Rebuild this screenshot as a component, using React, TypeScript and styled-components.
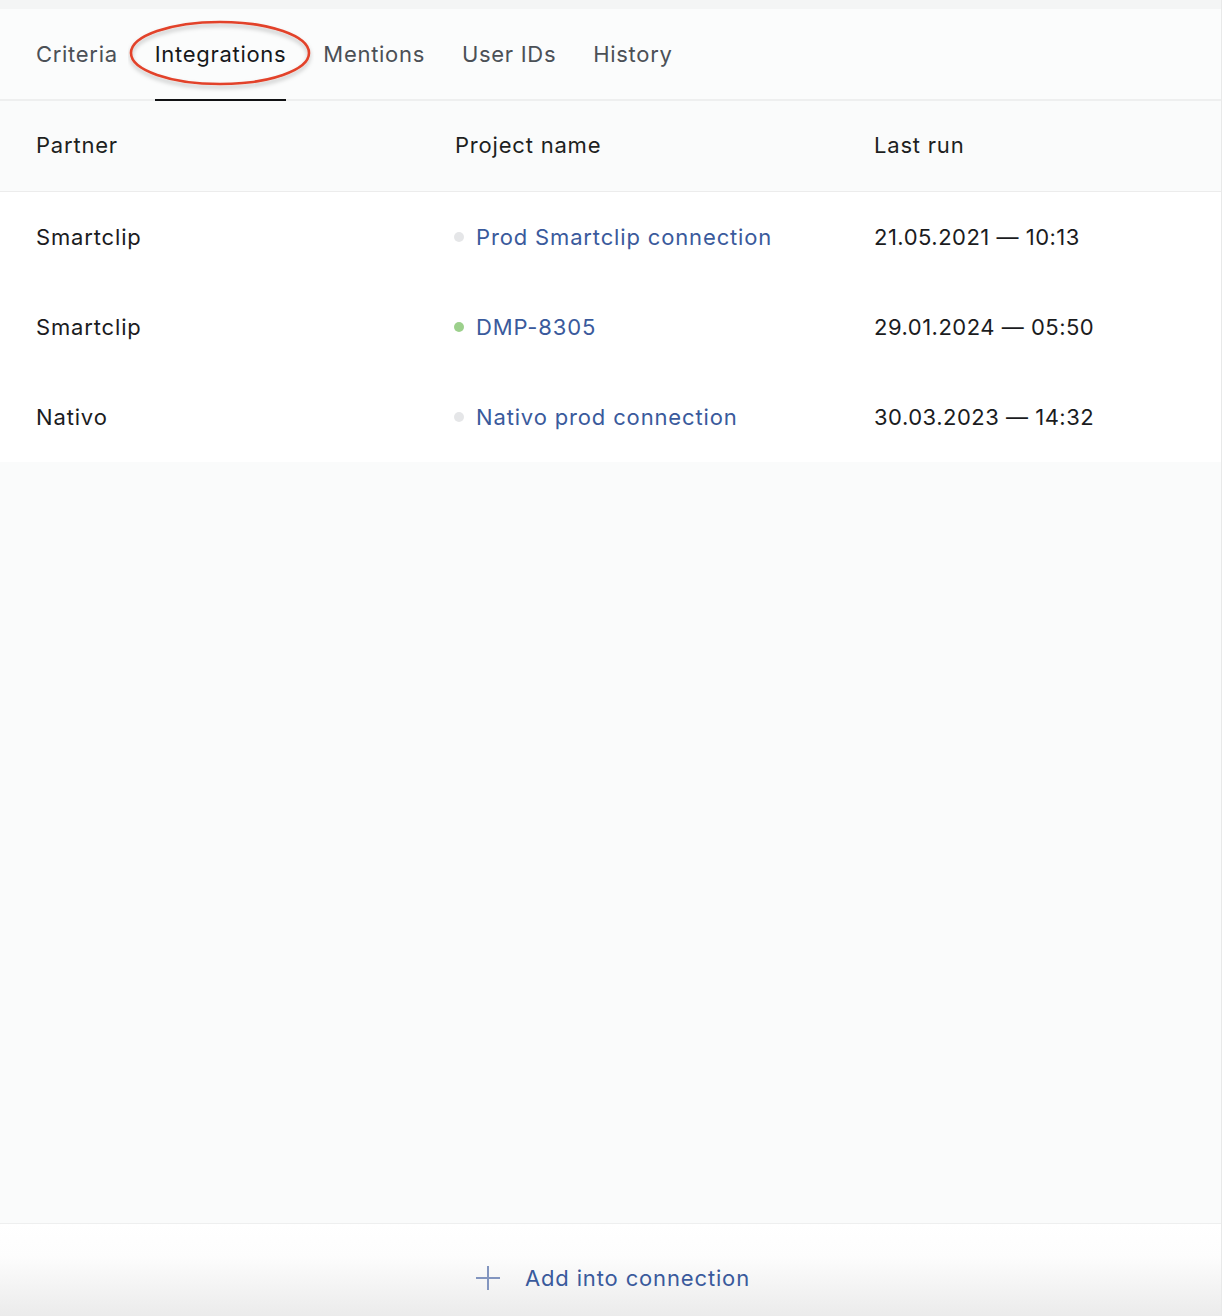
import React from 'react';
import styled, { createGlobalStyle } from 'styled-components';

const GlobalStyle = createGlobalStyle`
body {
  margin: 0;
  background: #ffffff;
  font-family: Inter, 'Noto Sans', sans-serif;
}
`;

const Page = styled.div`
display: flex;
flex-direction: column;
width: 1222px;
height: 1316px;
background: #fafbfb;
border-right: 1px solid #e8e9e9;
box-sizing: border-box;
`;

const TopStrip = styled.div`
height: 9px;
background: #f4f5f5;
`;

const TabBar = styled.nav`
position: relative;
display: flex;
align-items: stretch;
gap: 37px;
height: 92px;
padding-left: 36px;
background: #fbfcfc;
border-bottom: 2px solid #eeefef;
box-sizing: border-box;
`;

const Tab = styled.div<{ $active?: boolean }>`
position: relative;
display: flex;
align-items: center;
font-size: 22px;
letter-spacing: 0.7px;
color: ${({ $active }) => ($active ? '#16181a' : '#4b5056')};
&::after {
  content: '';
  position: absolute;
  left: 0;
  right: 0;
  bottom: -2px;
  height: 2px;
  background: ${({ $active }) => ($active ? '#111214' : 'transparent')};
}
`;

const Annotation = styled.svg`
position: absolute;
left: 128px;
top: 11px;
pointer-events: none;
`;

const HeaderRow = styled.div`
display: grid;
grid-template-columns: 419px 419px 1fr;
align-items: center;
height: 91px;
padding: 0 0 2px 36px;
background: #fafbfb;
border-bottom: 1px solid #ececec;
box-sizing: border-box;
font-size: 22px;
letter-spacing: 0.8px;
color: #1d1f21;
`;

const Body = styled.div`
background: #ffffff;
`;

const Row = styled.div`
display: grid;
grid-template-columns: 419px 419px 1fr;
align-items: center;
height: 90px;
padding-left: 36px;
font-size: 22px;
letter-spacing: 0.85px;
color: #1b1c1e;
`;

const LastRun = styled.div`
letter-spacing: 0.5px;
`;

const Project = styled.div`
display: flex;
align-items: center;
gap: 12px;
`;

const Dot = styled.span<{ $live?: boolean }>`
width: 10px;
height: 10px;
margin-left: -1px;
border-radius: 50%;
background: ${({ $live }) => ($live ? '#9cd08c' : '#e5e6e8')};
`;

const ProjectLink = styled.a`
color: #3a5a9c;
text-decoration: none;
`;

const Filler = styled.div`
flex: 1;
background: #fafbfb;
`;

const Footer = styled.div`
display: flex;
align-items: center;
justify-content: center;
height: 93px;
padding-top: 16px;
box-sizing: border-box;
border-top: 1px solid #eeefef;
background: linear-gradient(180deg, #ffffff 0%, #fdfdfd 35%, #ebebeb 100%);
`;

const AddButton = styled.button`
display: flex;
align-items: center;
gap: 24px;
border: none;
background: none;
padding: 0;
margin-left: 4px;
font-family: Inter, 'Noto Sans', sans-serif;
font-size: 22px;
letter-spacing: 0.85px;
color: #3a5a9c;
cursor: pointer;
`;

const rows = [
  { partner: 'Smartclip', project: 'Prod Smartclip connection', live: false, lastRun: '21.05.2021 — 10:13' },
  { partner: 'Smartclip', project: 'DMP-8305', live: true, lastRun: '29.01.2024 — 05:50' },
  { partner: 'Nativo', project: 'Nativo prod connection', live: false, lastRun: '30.03.2023 — 14:32' },
];

const tabs = ['Criteria', 'Integrations', 'Mentions', 'User IDs', 'History'];

const App: React.FC = () => (
  <>
    <GlobalStyle />
    <Page>
      <TopStrip />
      <TabBar>
        {tabs.map((tab) => (
          <Tab key={tab} $active={tab === 'Integrations'}>{tab}</Tab>
        ))}
        <Annotation width="186" height="76" viewBox="0 0 186 76">
          <defs>
            <filter id="shade" x="-10%" y="-10%" width="120%" height="140%">
              <feDropShadow dx="0" dy="3" stdDeviation="2" floodColor="#000" floodOpacity="0.25" />
            </filter>
          </defs>
          <ellipse cx="92" cy="33" rx="89" ry="31" fill="none" stroke="#e2432b" strokeWidth="2.6" filter="url(#shade)" />
        </Annotation>
      </TabBar>
      <HeaderRow>
        <div>Partner</div>
        <div>Project name</div>
        <div>Last run</div>
      </HeaderRow>
      <Body>
        {rows.map((row) => (
          <Row key={row.project}>
            <div>{row.partner}</div>
            <Project>
              <Dot $live={row.live} />
              <ProjectLink href="#">{row.project}</ProjectLink>
            </Project>
            <LastRun>{row.lastRun}</LastRun>
          </Row>
        ))}
      </Body>
      <Filler />
      <Footer>
        <AddButton type="button">
          <svg width="26" height="26" viewBox="0 0 26 26">
            <path d="M13 1v24M1 13h24" stroke="#8295bf" strokeWidth="2" fill="none" />
          </svg>
          Add into connection
        </AddButton>
      </Footer>
    </Page>
  </>
);

export default App;
